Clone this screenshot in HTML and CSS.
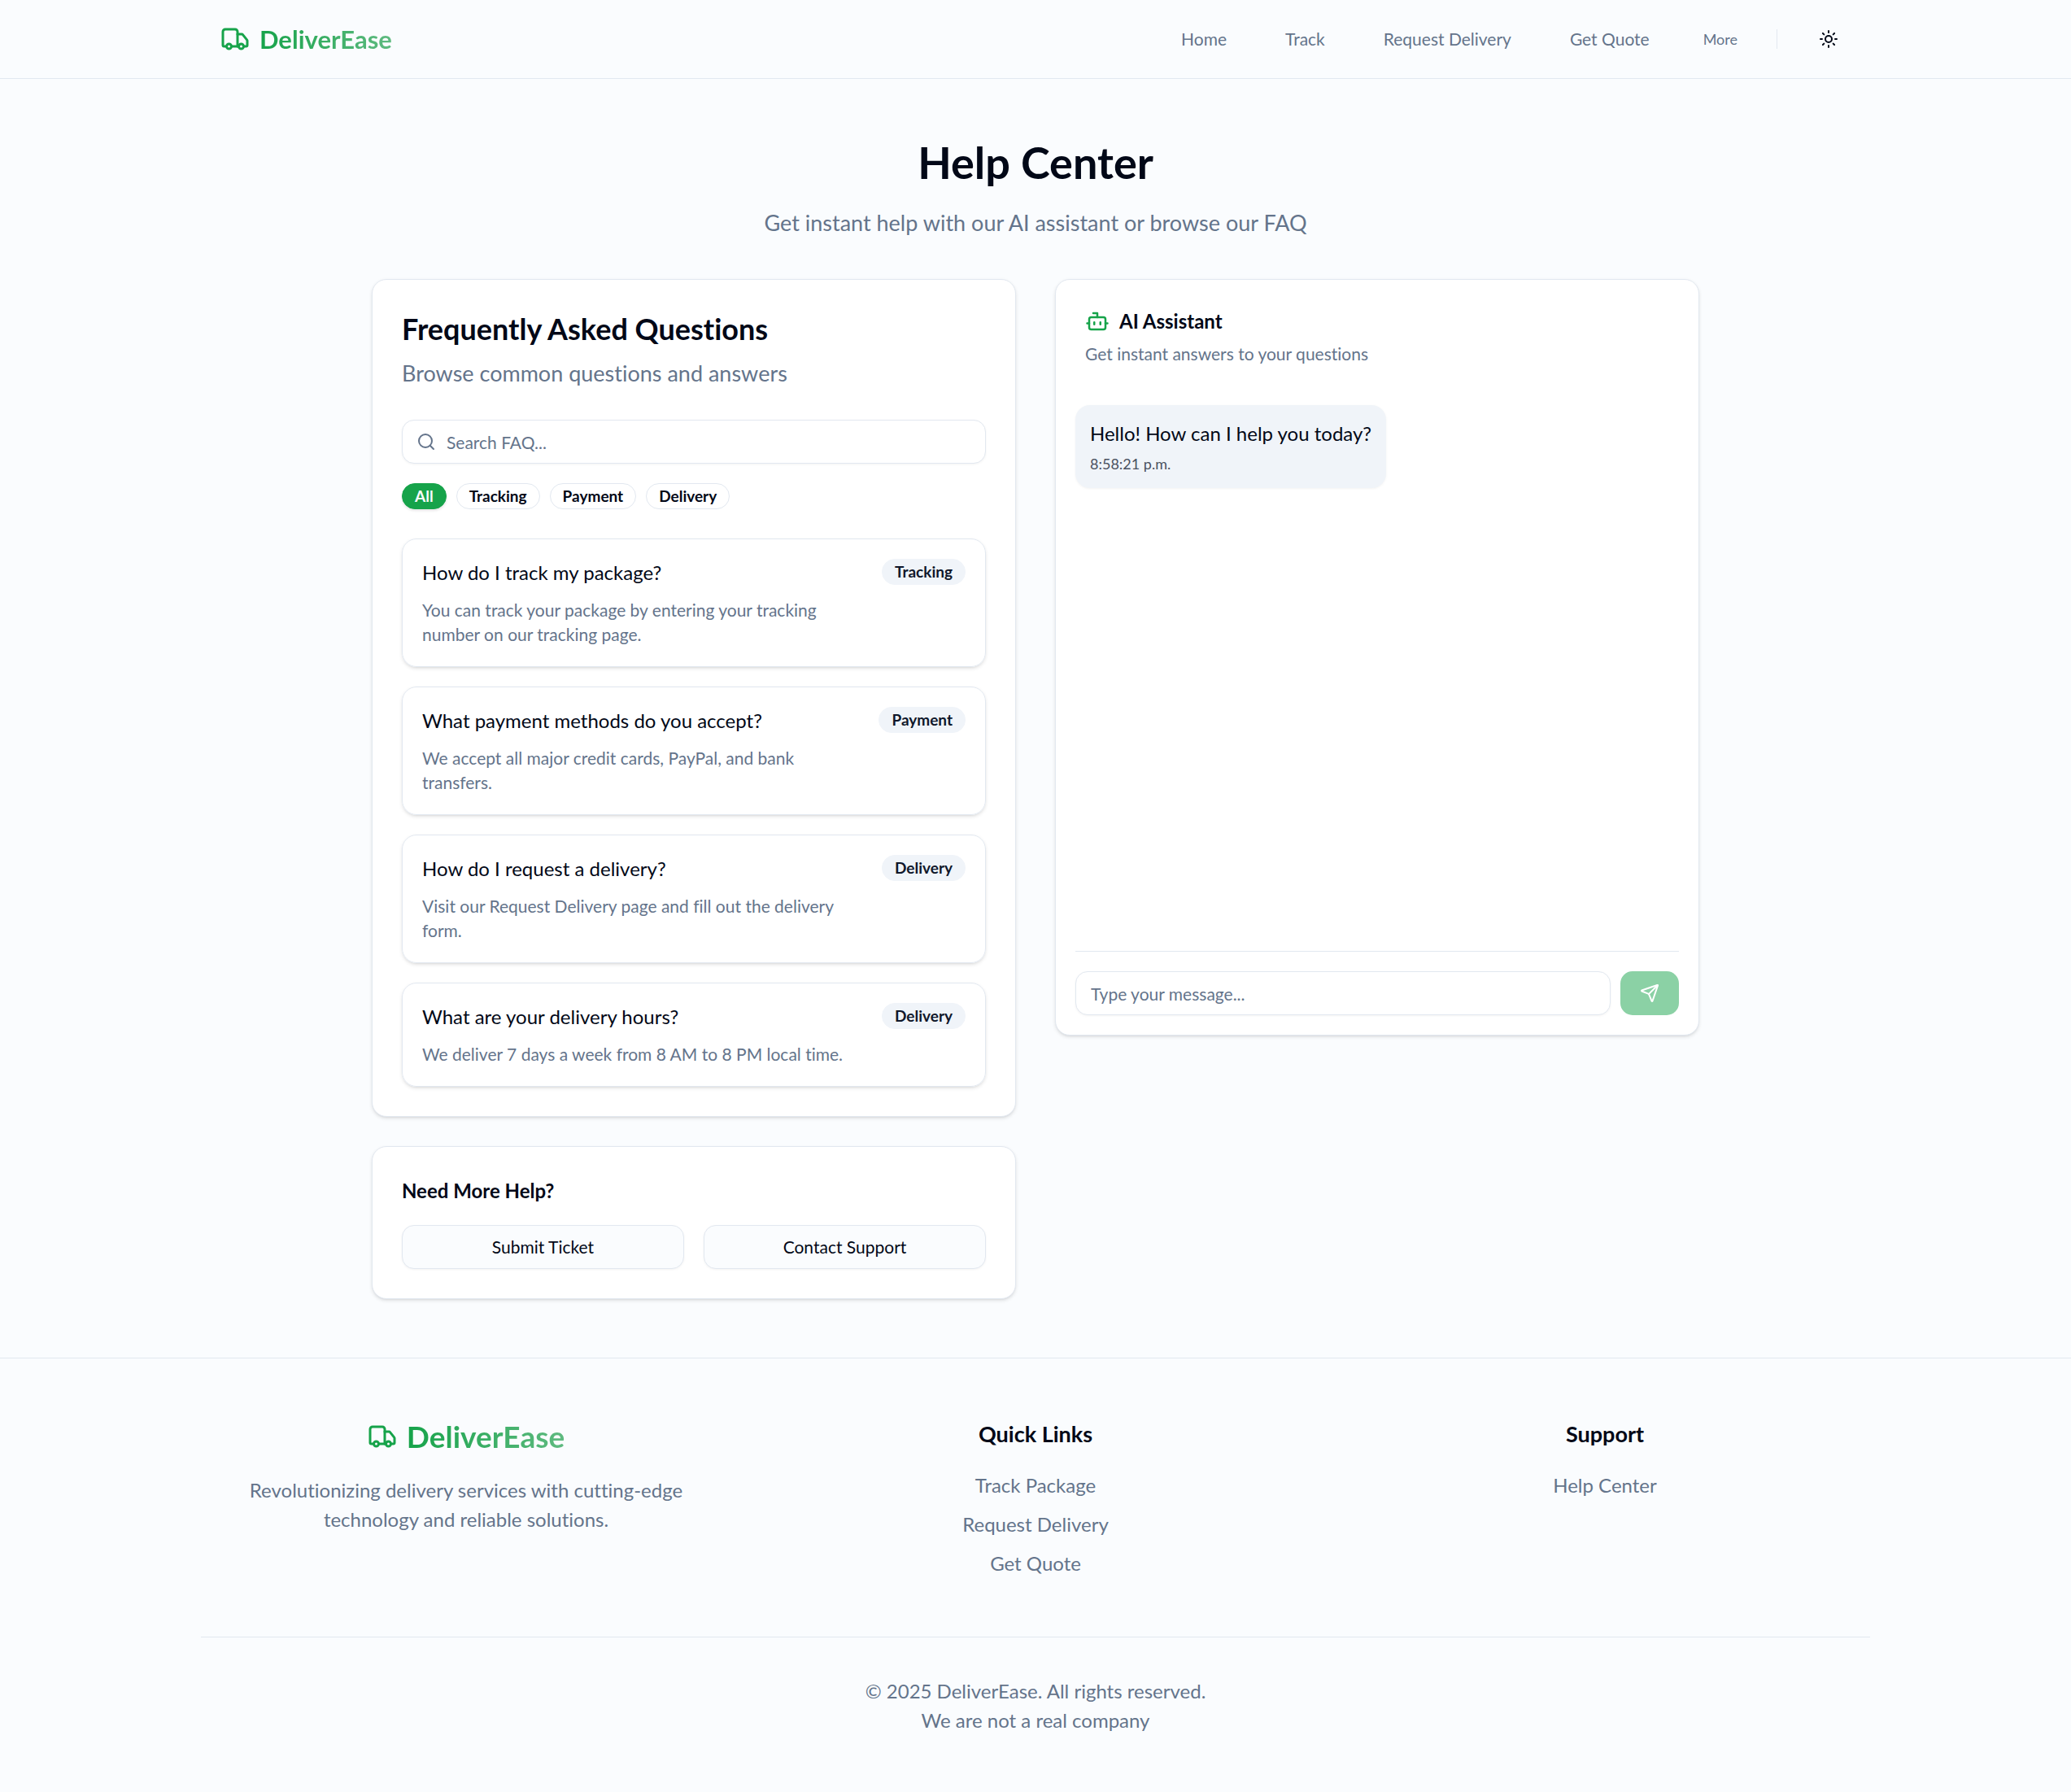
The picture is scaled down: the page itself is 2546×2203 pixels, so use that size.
FILE: index.html
```html
<!DOCTYPE html>
<html lang="en">
<head>
<meta charset="utf-8">
<meta name="viewport" content="width=device-width, initial-scale=1">
<title>Help Center - DeliverEase</title>
<link rel="stylesheet" href="styles.css">
</head>
<body>
<svg class="sprite" aria-hidden="true">
  <symbol id="truck" viewBox="0 0 24 24"><path d="M14 18V6a2 2 0 0 0-2-2H4a2 2 0 0 0-2 2v11a1 1 0 0 0 1 1h2"/><path d="M15 18H9"/><path d="M19 18h2a1 1 0 0 0 1-1v-3.65a1 1 0 0 0-.22-.624l-3.48-4.35A1 1 0 0 0 17.52 8H14"/><circle cx="17" cy="18" r="2"/><circle cx="7" cy="18" r="2"/></symbol>
</svg>

<header class="topbar">
  <div class="container topbar-inner">
    <a class="brand" href="#"><svg class="icon icon-lg" aria-hidden="true"><use href="#truck"/></svg><span class="brand-name">DeliverEase</span></a>
    <div class="topbar-end">
      <nav class="nav" aria-label="Main">
        <a href="#">Home</a>
        <a href="#">Track</a>
        <a href="#">Request Delivery</a>
        <a href="#">Get Quote</a>
        <button class="more" type="button">More</button>
      </nav>
      <span class="divider"></span>
      <button class="theme" type="button" aria-label="Toggle theme">
        <svg class="icon" viewBox="0 0 24 24" aria-hidden="true"><circle cx="12" cy="12" r="4"/><path d="M12 2v2M12 20v2M4.93 4.93l1.41 1.41M17.66 17.66l1.41 1.41M2 12h2M20 12h2M6.34 17.66l-1.41 1.41M19.07 4.93l-1.41 1.41"/></svg>
      </button>
    </div>
  </div>
</header>

<main class="main">
  <div class="intro">
    <h1>Help Center</h1>
    <p>Get instant help with our AI assistant or browse our FAQ</p>
  </div>
  <div class="columns">
    <div class="column">
      <section class="card">
        <h2 class="card-title">Frequently Asked Questions</h2>
        <p class="card-lead">Browse common questions and answers</p>
        <div class="search">
          <svg class="icon" viewBox="0 0 24 24" aria-hidden="true"><circle cx="11" cy="11" r="8"/><path d="m21 21-4.3-4.3"/></svg>
          <input class="field" type="text" placeholder="Search FAQ..." aria-label="Search FAQ">
        </div>
        <div class="chips">
          <button class="chip chip-active" type="button">All</button>
          <button class="chip" type="button">Tracking</button>
          <button class="chip" type="button">Payment</button>
          <button class="chip" type="button">Delivery</button>
        </div>
        <div class="faq-list">
          <article class="faq">
            <div class="faq-text"><h3>How do I track my package?</h3><p>You can track your package by entering your tracking number on our tracking page.</p></div>
            <span class="chip chip-soft">Tracking</span>
          </article>
          <article class="faq">
            <div class="faq-text"><h3>What payment methods do you accept?</h3><p>We accept all major credit cards, PayPal, and bank transfers.</p></div>
            <span class="chip chip-soft">Payment</span>
          </article>
          <article class="faq">
            <div class="faq-text"><h3>How do I request a delivery?</h3><p>Visit our Request Delivery page and fill out the delivery form.</p></div>
            <span class="chip chip-soft">Delivery</span>
          </article>
          <article class="faq">
            <div class="faq-text"><h3>What are your delivery hours?</h3><p>We deliver 7 days a week from 8 AM to 8 PM local time.</p></div>
            <span class="chip chip-soft">Delivery</span>
          </article>
        </div>
      </section>
      <section class="card">
        <h2 class="more-title">Need More Help?</h2>
        <div class="actions">
          <button class="btn" type="button">Submit Ticket</button>
          <button class="btn" type="button">Contact Support</button>
        </div>
      </section>
    </div>

    <section class="card chat">
      <div class="chat-head">
        <h2><svg class="icon icon-md" viewBox="0 0 24 24" aria-hidden="true"><path d="M12 8V4H8"/><rect width="16" height="12" x="4" y="8" rx="2"/><path d="M2 14h2M20 14h2M15 13v2M9 13v2"/></svg>AI Assistant</h2>
        <p>Get instant answers to your questions</p>
      </div>
      <div class="chat-log">
        <div class="bubble"><p>Hello! How can I help you today?</p><time>8:58:21 p.m.</time></div>
      </div>
      <form class="chat-form">
        <input class="field" type="text" placeholder="Type your message..." aria-label="Message">
        <button class="send" type="button" aria-label="Send" disabled>
          <svg class="icon" viewBox="0 0 24 24" aria-hidden="true"><path d="M14.536 21.686a.5.5 0 0 0 .937-.024l6.5-19a.496.496 0 0 0-.635-.635l-19 6.5a.5.5 0 0 0-.024.937l7.93 3.18a2 2 0 0 1 1.112 1.11z"/><path d="m21.854 2.147-10.94 10.939"/></svg>
        </button>
      </form>
    </section>
  </div>
</main>

<footer class="footer">
  <div class="container">
    <div class="footer-grid">
      <div>
        <a class="brand brand-footer" href="#"><svg class="icon icon-lg" aria-hidden="true"><use href="#truck"/></svg><span class="brand-name">DeliverEase</span></a>
        <p>Revolutionizing delivery services with cutting-edge technology and reliable solutions.</p>
      </div>
      <div>
        <h3>Quick Links</h3>
        <ul><li><a href="#">Track Package</a></li><li><a href="#">Request Delivery</a></li><li><a href="#">Get Quote</a></li></ul>
      </div>
      <div>
        <h3>Support</h3>
        <ul><li><a href="#">Help Center</a></li></ul>
      </div>
    </div>
    <div class="legal">
      <p>© 2025 DeliverEase. All rights reserved.</p>
      <p>We are not a real company</p>
    </div>
  </div>
</footer>
</body>
</html>
```
FILE: styles.css
```css
:root {
  --ink: #020817;
  --muted: #64748b;
  --line: #e2e8f0;
  --soft: #f0f4f9;
  --green: #16a34a;
  --page: #fafcfe;
}

* { box-sizing: border-box; }

body {
  margin: 0;
  background: var(--page);
  color: var(--ink);
  font-family: Lato, "Open Sans", sans-serif;
  font-size: 24px;
  line-height: 36px;
  font-variant-ligatures: none;
}

h1, h2, h3, p, ul { margin: 0; padding: 0; }
ul { list-style: none; }
a { color: inherit; text-decoration: none; }
button, input { font: inherit; color: inherit; margin: 0; }
button { padding: 0; border: 0; background: none; cursor: pointer; }

.sprite { position: absolute; width: 0; height: 0; }

.icon {
  flex: none;
  width: 24px;
  height: 24px;
  fill: none;
  stroke: currentColor;
  stroke-width: 2;
  stroke-linecap: round;
  stroke-linejoin: round;
}
.icon-md { width: 30px; height: 30px; color: var(--green); }
.icon-lg { width: 36px; height: 36px; }

.container { max-width: 2100px; margin: 0 auto; padding: 0 24px; }

/* Top bar */
.topbar { border-bottom: 1px solid var(--line); }
.topbar-inner { display: flex; align-items: center; justify-content: space-between; height: 96px; padding: 0 48px; }
.topbar-end, .nav { display: flex; align-items: center; }
.nav { gap: 24px; color: var(--muted); font-size: 21px; }
.nav a { padding: 0 24px; }
.nav .more { padding: 0 18px; font-size: 18px; }
.divider { width: 1px; height: 24px; margin: 0 36px 0 30px; background: var(--line); }
.theme { display: flex; align-items: center; justify-content: center; width: 54px; height: 54px; }

.brand { display: inline-flex; align-items: center; gap: 12px; color: var(--green); font-size: 31px; font-weight: 700; }
.brand-name { background: linear-gradient(90deg, var(--green), #5fba80); background-clip: text; -webkit-background-clip: text; color: transparent; }
.brand-footer { margin-bottom: 24px; font-size: 37px; line-height: 48px; }

/* Page */
.main { max-width: 1680px; margin: 0 auto; padding: 72px 24px; }
.intro { margin-bottom: 48px; text-align: center; }
.intro h1 { margin-bottom: 22px; font-size: 54px; line-height: 62px; }
.intro p { color: var(--muted); font-size: 27px; line-height: 42px; }

.columns { display: grid; grid-template-columns: 1fr 1fr; gap: 48px; align-items: start; }
.column { display: grid; gap: 36px; }

.card {
  padding: 36px;
  border: 1px solid var(--line);
  border-radius: 18px;
  background: #fff;
  box-shadow: 0 2px 4px rgba(0, 0, 0, .1), 0 2px 3px -2px rgba(0, 0, 0, .1);
}
.card-title { margin-bottom: 10px; font-size: 36px; line-height: 48px; }
.card-lead { margin-bottom: 36px; color: var(--muted); font-size: 27px; line-height: 42px; }

.field {
  width: 100%;
  min-width: 0;
  height: 54px;
  padding: 0 18px;
  border: 1px solid var(--line);
  border-radius: 15px;
  background: #fff;
  box-shadow: 0 1px 3px rgba(0, 0, 0, .05);
  font-size: 21px;
}
.field::placeholder { color: var(--muted); opacity: 1; }

.search { display: grid; align-items: center; }
.search > * { grid-area: 1 / 1; }
.search .icon { z-index: 1; margin-left: 18px; color: var(--muted); }
.search .field { padding-left: 54px; }

.chips { display: flex; gap: 12px; margin: 24px 0 36px; }
.chip {
  flex: none;
  height: 32px;
  padding: 0 15px;
  border: 1px solid var(--line);
  border-radius: 16px;
  font-size: 19px;
  font-weight: 700;
  line-height: 30px;
}
.chip-active { border-color: var(--green); background: var(--green); color: #f8fafc; box-shadow: 0 2px 3px rgba(0, 0, 0, .1); }
.chip-soft { border-color: var(--soft); background: var(--soft); color: #0f172a; }

.faq-list { display: grid; gap: 24px; }
.faq {
  display: flex;
  align-items: flex-start;
  justify-content: space-between;
  gap: 24px;
  padding: 24px;
  border: 1px solid var(--line);
  border-radius: 18px;
  box-shadow: 0 2px 4px rgba(0, 0, 0, .1), 0 2px 3px -2px rgba(0, 0, 0, .1);
}
.faq-text { max-width: 528px; }
.faq h3 { margin-bottom: 14px; font-size: 24px; font-weight: 400; line-height: 34px; }
.faq p { color: var(--muted); font-size: 21px; line-height: 30px; }

.more-title { margin-bottom: 24px; font-size: 24px; }
.actions { display: grid; grid-template-columns: 1fr 1fr; gap: 24px; }
.btn {
  height: 54px;
  border: 1px solid var(--line);
  border-radius: 15px;
  background: var(--page);
  box-shadow: 0 1px 3px rgba(0, 0, 0, .05);
  font-size: 21px;
}

/* Assistant */
.chat { display: flex; flex-direction: column; padding: 36px 24px 24px; }
.chat-head { padding: 0 12px; margin-bottom: 48px; }
.chat-head h2 { display: flex; align-items: center; gap: 12px; margin-bottom: 10px; font-size: 24px; line-height: 30px; }
.chat-head p { color: var(--muted); font-size: 21px; line-height: 30px; }
.chat-log { min-height: 671px; }
.bubble { width: fit-content; padding: 18px; border-radius: 18px; background: var(--soft); box-shadow: 0 1px 3px rgba(0, 0, 0, .05); }
.bubble p { margin-bottom: 8px; line-height: 34px; }
.bubble time { display: block; color: #4a5160; font-size: 18px; line-height: 24px; }
.chat-form { display: flex; gap: 12px; padding-top: 24px; border-top: 1px solid var(--line); }
.send { display: flex; flex: none; align-items: center; justify-content: center; width: 72px; height: 54px; border-radius: 15px; background: #8bd1a5; color: #fff; }

/* Footer */
.footer { border-top: 1px solid var(--line); text-align: center; }
.footer-grid { display: grid; grid-template-columns: repeat(3, 1fr); gap: 48px; padding: 72px 0; color: var(--muted); }
.footer h3 { margin-bottom: 24px; color: var(--ink); font-size: 27px; line-height: 42px; }
.footer ul { display: grid; gap: 12px; }
.legal { padding: 48px 0 70px; border-top: 1px solid var(--line); color: var(--muted); }
```
